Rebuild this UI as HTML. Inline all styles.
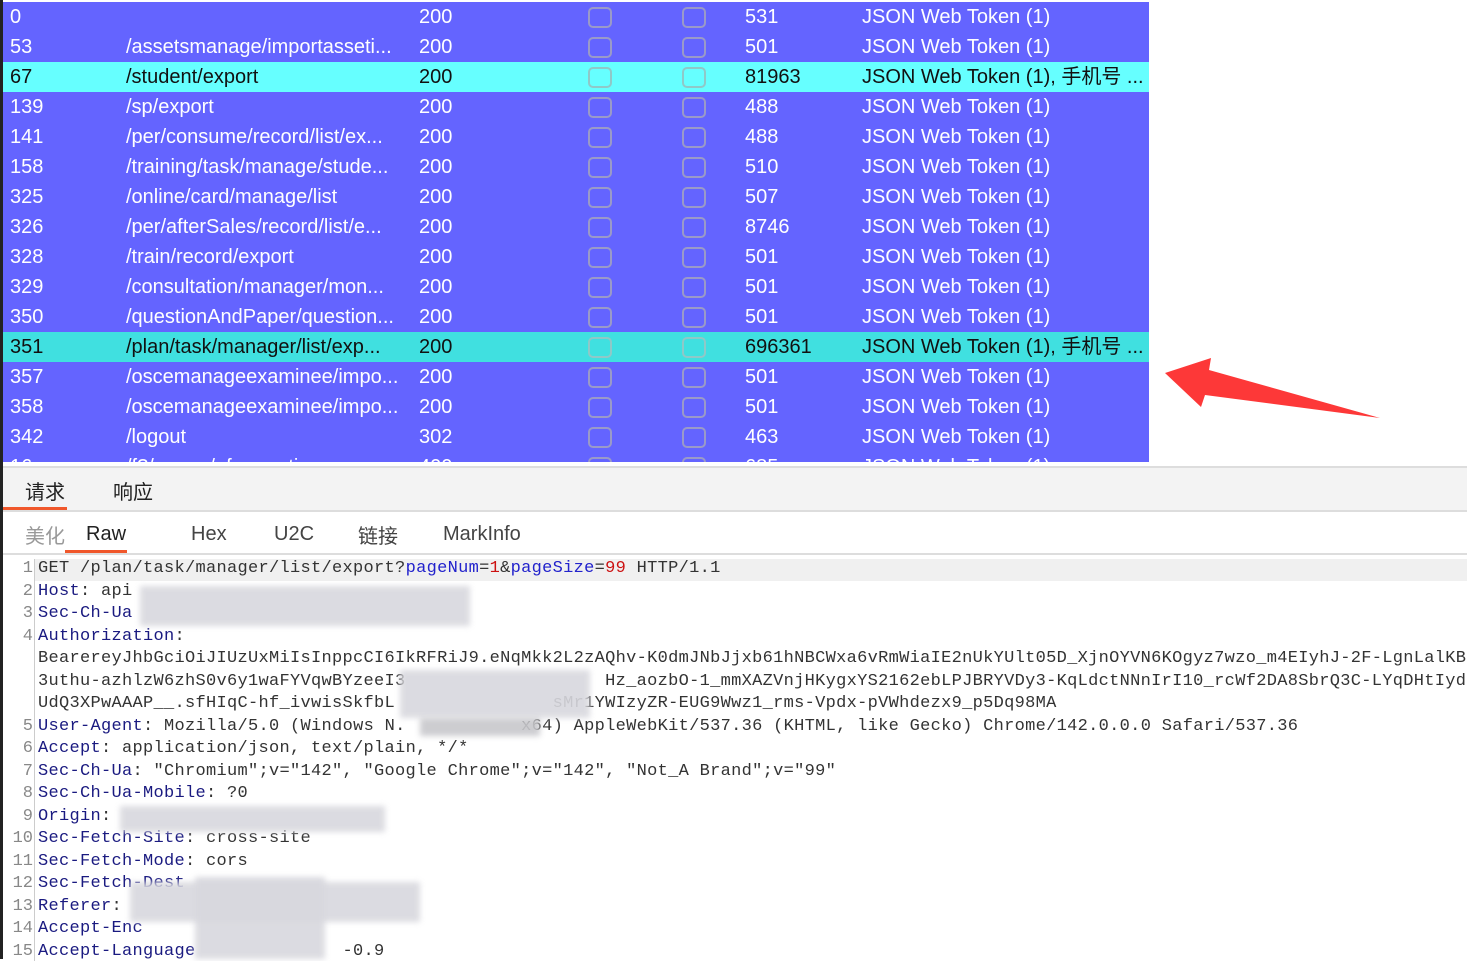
<!DOCTYPE html><html><head><meta charset="utf-8"><style>
*{margin:0;padding:0;box-sizing:border-box}
body{width:1467px;height:959px;overflow:hidden;background:#fff;position:relative;font-family:"Liberation Sans","Noto Sans CJK SC",sans-serif}
.lb{position:absolute;left:0;top:0;width:3px;height:959px;background:#222;z-index:5}
.tbl{position:absolute;left:3px;top:2px;width:1146px;height:460px;overflow:hidden;background:#6464ff}
.r{position:absolute;left:0;width:1146px;height:30px;color:#fff;font-size:20px;line-height:30px}
.r span{position:absolute;top:0;white-space:nowrap}
.r.c1{background:#66ffff;color:#111}.r.c2{background:#40e0e0;color:#111}
.cb{position:absolute;top:5px;width:24px;height:21px;border:2px solid #9a9ac8;border-radius:5px}
.c1 .cb,.c2 .cb{border-color:#8fc8c8}
.tabs{position:absolute;left:3px;top:466px;width:1464px;height:46px;background:#f3f3f3;border-top:2px solid #ddd;border-bottom:2px solid #ddd;font-size:20px}
.tabs2{position:absolute;left:3px;top:512px;width:1464px;height:43px;background:#fff;border-bottom:2px solid #ddd;font-size:20px}
.t{position:absolute;top:8px;color:#222}
.ul{position:absolute;height:3px;background:#f0572b}
.code{position:absolute;left:3px;top:559px;width:1464px;font-family:"Liberation Mono","Noto Serif CJK SC",monospace;font-size:17px}
.ln{position:absolute;left:0;width:30px;text-align:right;color:#888}
.gut{position:absolute;left:31px;top:0;width:1px;height:402px;background:#ccc}
.l{position:absolute;left:35px;white-space:pre;color:#333;letter-spacing:0.3px}
.k{color:#1a1a80}.b{color:#2222cc}.rd{color:#cc1111}
.blur{position:absolute;background:#d8d8de;filter:blur(3px);opacity:.9}
</style></head><body>
<div class="lb"></div>
<div class="tbl">
<div class="r" style="top:0"><span style="left:7px">0</span><span style="left:416px">200</span><div class="cb" style="left:585px"></div><div class="cb" style="left:679px"></div><span style="left:742px">531</span><span style="left:859px">JSON Web Token (1)</span></div>
<div class="r" style="top:30px"><span style="left:7px">53</span><span style="left:123px">/assetsmanage/importasseti...</span><span style="left:416px">200</span><div class="cb" style="left:585px"></div><div class="cb" style="left:679px"></div><span style="left:742px">501</span><span style="left:859px">JSON Web Token (1)</span></div>
<div class="r c1" style="top:60px"><span style="left:7px">67</span><span style="left:123px">/student/export</span><span style="left:416px">200</span><div class="cb" style="left:585px"></div><div class="cb" style="left:679px"></div><span style="left:742px">81963</span><span style="left:859px">JSON Web Token (1), 手机号 ...</span></div>
<div class="r" style="top:90px"><span style="left:7px">139</span><span style="left:123px">/sp/export</span><span style="left:416px">200</span><div class="cb" style="left:585px"></div><div class="cb" style="left:679px"></div><span style="left:742px">488</span><span style="left:859px">JSON Web Token (1)</span></div>
<div class="r" style="top:120px"><span style="left:7px">141</span><span style="left:123px">/per/consume/record/list/ex...</span><span style="left:416px">200</span><div class="cb" style="left:585px"></div><div class="cb" style="left:679px"></div><span style="left:742px">488</span><span style="left:859px">JSON Web Token (1)</span></div>
<div class="r" style="top:150px"><span style="left:7px">158</span><span style="left:123px">/training/task/manage/stude...</span><span style="left:416px">200</span><div class="cb" style="left:585px"></div><div class="cb" style="left:679px"></div><span style="left:742px">510</span><span style="left:859px">JSON Web Token (1)</span></div>
<div class="r" style="top:180px"><span style="left:7px">325</span><span style="left:123px">/online/card/manage/list</span><span style="left:416px">200</span><div class="cb" style="left:585px"></div><div class="cb" style="left:679px"></div><span style="left:742px">507</span><span style="left:859px">JSON Web Token (1)</span></div>
<div class="r" style="top:210px"><span style="left:7px">326</span><span style="left:123px">/per/afterSales/record/list/e...</span><span style="left:416px">200</span><div class="cb" style="left:585px"></div><div class="cb" style="left:679px"></div><span style="left:742px">8746</span><span style="left:859px">JSON Web Token (1)</span></div>
<div class="r" style="top:240px"><span style="left:7px">328</span><span style="left:123px">/train/record/export</span><span style="left:416px">200</span><div class="cb" style="left:585px"></div><div class="cb" style="left:679px"></div><span style="left:742px">501</span><span style="left:859px">JSON Web Token (1)</span></div>
<div class="r" style="top:270px"><span style="left:7px">329</span><span style="left:123px">/consultation/manager/mon...</span><span style="left:416px">200</span><div class="cb" style="left:585px"></div><div class="cb" style="left:679px"></div><span style="left:742px">501</span><span style="left:859px">JSON Web Token (1)</span></div>
<div class="r" style="top:300px"><span style="left:7px">350</span><span style="left:123px">/questionAndPaper/question...</span><span style="left:416px">200</span><div class="cb" style="left:585px"></div><div class="cb" style="left:679px"></div><span style="left:742px">501</span><span style="left:859px">JSON Web Token (1)</span></div>
<div class="r c2" style="top:330px"><span style="left:7px">351</span><span style="left:123px">/plan/task/manager/list/exp...</span><span style="left:416px">200</span><div class="cb" style="left:585px"></div><div class="cb" style="left:679px"></div><span style="left:742px">696361</span><span style="left:859px">JSON Web Token (1), 手机号 ...</span></div>
<div class="r" style="top:360px"><span style="left:7px">357</span><span style="left:123px">/oscemanageexaminee/impo...</span><span style="left:416px">200</span><div class="cb" style="left:585px"></div><div class="cb" style="left:679px"></div><span style="left:742px">501</span><span style="left:859px">JSON Web Token (1)</span></div>
<div class="r" style="top:390px"><span style="left:7px">358</span><span style="left:123px">/oscemanageexaminee/impo...</span><span style="left:416px">200</span><div class="cb" style="left:585px"></div><div class="cb" style="left:679px"></div><span style="left:742px">501</span><span style="left:859px">JSON Web Token (1)</span></div>
<div class="r" style="top:420px"><span style="left:7px">342</span><span style="left:123px">/logout</span><span style="left:416px">302</span><div class="cb" style="left:585px"></div><div class="cb" style="left:679px"></div><span style="left:742px">463</span><span style="left:859px">JSON Web Token (1)</span></div>
<div class="r" style="top:450px"><span style="left:7px">16</span><span style="left:123px">/f?/nnnnn/nfnrmnation</span><span style="left:416px">400</span><div class="cb" style="left:585px"></div><div class="cb" style="left:679px"></div><span style="left:742px">685</span><span style="left:859px">JSON Web Token (1)</span></div>
</div>
<svg style="position:absolute;left:0;top:0" width="1467" height="959"><polygon points="1165,373 1211,358 1209,370 1380,418 1205,395 1201,407" fill="#fd3838"/></svg>
<div class="tabs"><span class="t" style="left:22px">请求</span><span class="t" style="left:110px">响应</span><div class="ul" style="left:0;width:64px;top:39px"></div></div>
<div class="tabs2"><span class="t" style="left:22px;color:#999">美化</span><span class="t" style="left:83px;top:11px">Raw</span><span class="t" style="left:188px;color:#444;top:11px">Hex</span><span class="t" style="left:271px;color:#444;top:11px">U2C</span><span class="t" style="left:355px;color:#444">链接</span><span class="t" style="left:440px;color:#444;top:11px">MarkInfo</span><div class="ul" style="left:62px;width:62px;top:38px"></div></div>
<div class="code">
<div style="position:absolute;left:32px;top:0;width:1432px;height:22px;background:#f0f0f0"></div>
<div class="gut"></div>
<div class="ln" style="top:0">1</div><div class="l" style="top:0">GET /plan/task/manager/list/export?<span class="b">pageNum</span>=<span class="rd">1</span>&amp;<span class="b">pageSize</span>=<span class="rd">99</span> HTTP/1.1</div>
<div class="ln" style="top:22.5px">2</div><div class="l" style="top:22.5px"><span class="k">Host</span>: api</div>
<div class="ln" style="top:45px">3</div><div class="l" style="top:45px"><span class="k">Sec-Ch-Ua</span></div>
<div class="ln" style="top:67.5px">4</div><div class="l" style="top:67.5px"><span class="k">Authorization</span>:</div>
<div class="l" style="top:90px">BearereyJhbGciOiJIUzUxMiIsInppcCI6IkRFRiJ9.eNqMkk2L2zAQhv-K0dmJNbJjxb61hNBCWxa6vRmWiaIE2nUkYUlt05D_XjnOYVN6KOgyz7wzo_m4EIyhJ-2F-LgnLalKB</div>
<div class="l" style="top:112.5px">3uthu-azhlzW6zhS0v6y1waFYVqwBYzeeI3                   Hz_aozbO-1_mmXAZVnjHKygxYS2162ebLPJBRYVDy3-KqLdctNNnIrI10_rcWf2DA8SbrQ3C-LYqDHtIyd6</div>
<div class="l" style="top:135px">UdQ3XPwAAAP__.sfHIqC-hf_ivwisSkfbL               sMr1YWIzyZR-EUG9Wwz1_rms-Vpdx-pVWhdezx9_p5Dq98MA</div>
<div class="ln" style="top:157.5px">5</div><div class="l" style="top:157.5px"><span class="k">User-Agent</span>: Mozilla/5.0 (Windows N.           x64) AppleWebKit/537.36 (KHTML, like Gecko) Chrome/142.0.0.0 Safari/537.36</div>
<div class="ln" style="top:180px">6</div><div class="l" style="top:180px"><span class="k">Accept</span>: application/json, text/plain, */*</div>
<div class="ln" style="top:202.5px">7</div><div class="l" style="top:202.5px"><span class="k">Sec-Ch-Ua</span>: "Chromium";v="142", "Google Chrome";v="142", "Not_A Brand";v="99"</div>
<div class="ln" style="top:225px">8</div><div class="l" style="top:225px"><span class="k">Sec-Ch-Ua-Mobile</span>: ?0</div>
<div class="ln" style="top:247.5px">9</div><div class="l" style="top:247.5px"><span class="k">Origin</span>:</div>
<div class="ln" style="top:270px">10</div><div class="l" style="top:270px"><span class="k">Sec-Fetch-Site</span>: cross-site</div>
<div class="ln" style="top:292.5px">11</div><div class="l" style="top:292.5px"><span class="k">Sec-Fetch-Mode</span>: cors</div>
<div class="ln" style="top:315px">12</div><div class="l" style="top:315px"><span class="k">Sec-Fetch-Dest</span></div>
<div class="ln" style="top:337.5px">13</div><div class="l" style="top:337.5px"><span class="k">Referer</span>:</div>
<div class="ln" style="top:360px">14</div><div class="l" style="top:360px"><span class="k">Accept-Enc</span></div>
<div class="ln" style="top:382.5px">15</div><div class="l" style="top:382.5px"><span class="k">Accept-Language</span>              -0.9</div>
</div>
<div class="blur" style="left:140px;top:586px;width:330px;height:40px"></div>
<div class="blur" style="left:400px;top:670px;width:190px;height:48px"></div>
<div class="blur" style="left:420px;top:718px;width:120px;height:18px;background:#c8c8cc"></div>
<div class="blur" style="left:120px;top:806px;width:265px;height:26px"></div>
<div class="blur" style="left:130px;top:882px;width:290px;height:40px"></div>
<div class="blur" style="left:195px;top:877px;width:130px;height:82px"></div>
</body></html>
